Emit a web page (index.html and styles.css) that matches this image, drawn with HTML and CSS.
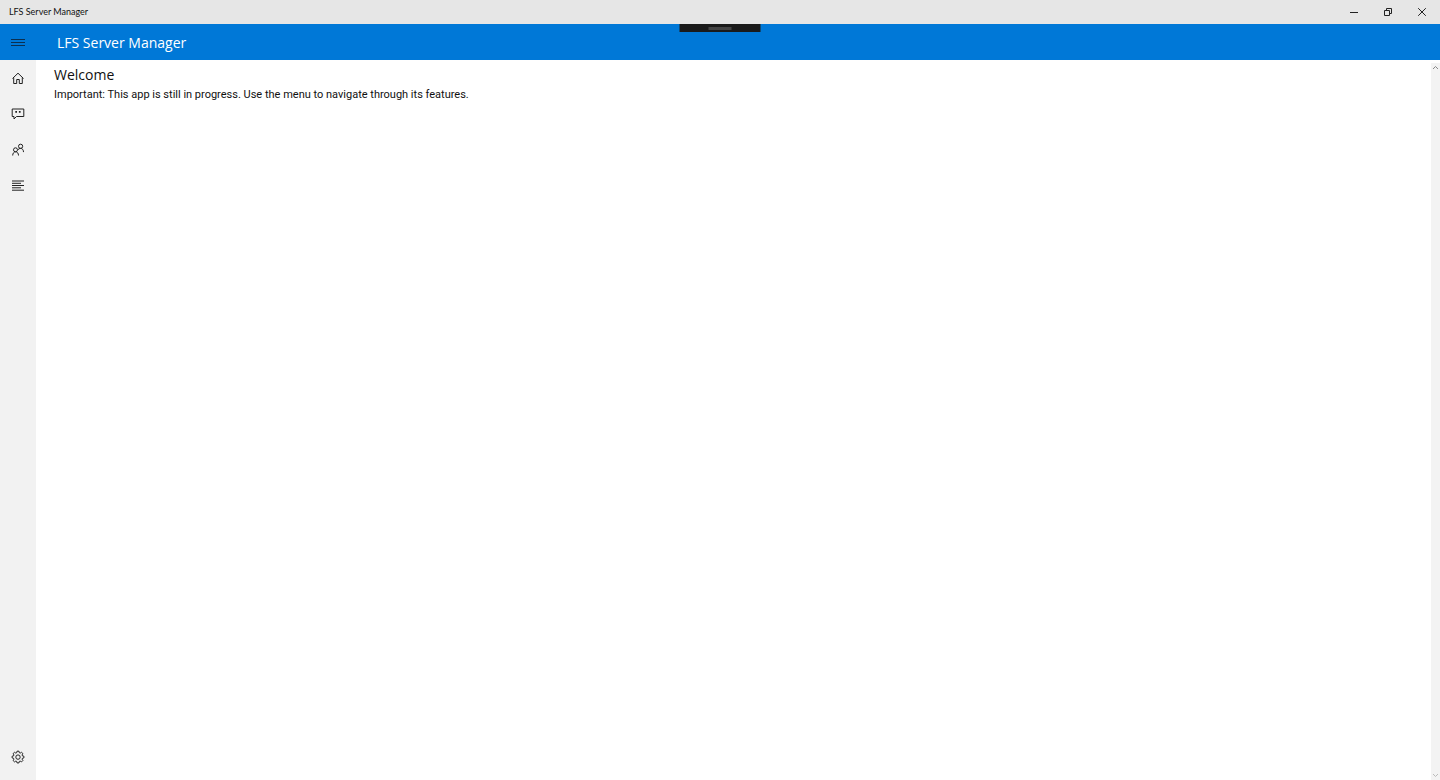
FILE: index.html
```html
<!DOCTYPE html>
<html lang="en">
<head>
    <meta charset="UTF-8">
    <meta name="viewport" content="width=device-width, initial-scale=1.0">
    <title>LFS Server Manager</title>
    <link rel="stylesheet" href="styles.css">
</head>
<body>
    <div class="titlebar">
        <span class="titlebar-text">LFS Server Manager</span>
        <div class="window-buttons">
            <button type="button" aria-label="Minimize">
                <svg width="8" height="8" viewBox="0 0 8 8"><path d="M0 4.500h8"/></svg>
            </button>
            <button type="button" aria-label="Restore">
                <svg width="8" height="8" viewBox="0 0 8 8"><path d="M0.5 2.5h5v5h-5zM2.5 2.5v-2h5v5h-2"/></svg>
            </button>
            <button type="button" aria-label="Close">
                <svg width="8" height="8" viewBox="0 0 8 8"><path d="M0.200 0.200l7.600 7.600M7.800 0.200l-7.600 7.600"/></svg>
            </button>
        </div>
    </div>

    <header class="header">
        <button type="button" class="menu-button" aria-label="Menu">
            <svg width="14" height="9" viewBox="0 0 14 9"><path d="M0 1.5h14M0 4.5h14M0 7.5h14"/></svg>
        </button>
        <h1>LFS Server Manager</h1>
        <!-- Debug toolbar handle -->
        <div class="debug-bar"><span></span></div>
    </header>

    <div class="main">
        <nav class="sidebar">
            <a href="#home" aria-label="Home">
                <svg width="14" height="14" viewBox="0 0 14 14"><path d="M1.500 7.500L7 2.200L12.500 7.500M2.700 6.500v6h3v-4h2.600v4h3v-6"/></svg>
            </a>
            <a href="#chat" aria-label="Chat">
                <svg width="14" height="14" viewBox="0 0 14 14"><path d="M1.200 2h11.600v7.500h-7.300l-2.500 2.500v-2.500h-1.800z"/><path class="dots" d="M4.300 4h1.700v1.700h-1.700zM7.900 4h1.700v1.700h-1.700z"/></svg>
            </a>
            <a href="#players" aria-label="Players">
                <svg width="14" height="14" viewBox="0 0 14 14"><circle cx="4.500" cy="6.800" r="2"/><circle cx="9.600" cy="3.300" r="2.100"/><path d="M1.700 12.500c0-2.200 1.200-3.700 2.900-3.700s2.900 1.500 2.900 3.700M7 6.700c.6-.9 1.500-1.300 2.600-1.300c1.800 0 2.900 1.500 2.900 3.700"/></svg>
            </a>
            <a href="#log" aria-label="Log">
                <svg width="14" height="14" viewBox="0 0 14 14"><path d="M1 2h12M1 4.300h9M1 6.500h12M1 8.800h9M1 11.200h12"/></svg>
            </a>
            <a href="#settings" class="settings" aria-label="Settings">
                <svg width="14" height="14" viewBox="0 0 14 14"><path d="M5.700 2.700L6 1.200h2l.3 1.500l.9.400l1.300-.8l1.400 1.300l-.8 1.300l.3 1l1.500.3v1.700l-1.500.4l-.3.900l.8 1.300l-1.400 1.400l-1.300-.8l-.9.300l-.3 1.500H6l-.3-1.500l-.9-.3l-1.300.8l-1.400-1.400l.8-1.300l-.3-.9l-1.500-.4V6.200l1.500-.3l.3-1l-.8-1.300l1.400-1.300l1.300.8z"/><circle cx="7" cy="7.100" r="2.200"/></svg>
            </a>
        </nav>

        <main class="content">
            <h2>Welcome</h2>
            <p>Important: This app is still in progress. Use the menu to navigate through its features.</p>
        </main>

        <div class="scrollbar">
            <button type="button" aria-label="Scroll up">
                <svg width="7" height="5" viewBox="0 0 7 5"><path d="M1 4l2.500-2.500L6 4"/></svg>
            </button>
            <button type="button" class="scroll-down" aria-label="Scroll down">
                <svg width="7" height="5" viewBox="0 0 7 5"><path d="M1 1l2.500 2.500L6 1"/></svg>
            </button>
        </div>
    </div>
</body>
</html>
```
FILE: styles.css
```css
* {
    box-sizing: border-box;
}
body {
    display: flex;
    flex-direction: column;
    height: 100vh;
    margin: 0;
    background-color: #fff;
    color: #111;
    font-family: "Open Sans", "Segoe UI", sans-serif;
}
h1, h2, p {
    margin: 0;
    font-weight: normal;
}
button {
    display: flex;
    align-items: center;
    justify-content: center;
    padding: 0;
    border: none;
    background: none;
}
svg {
    fill: none;
    stroke: #222;
    stroke-width: 1;
}

/* Window title bar */
.titlebar {
    display: flex;
    flex: none;
    justify-content: space-between;
    height: 24px;
    padding-left: 9px;
    background-color: #e6e6e6;
}
.titlebar-text {
    font-family: Lato, "Segoe UI", sans-serif;
    font-size: 9px;
    line-height: 24px;
}
.window-buttons {
    display: flex;
    padding-right: 1px;
}
.window-buttons button {
    width: 34px;
}

/* App header */
.header {
    position: relative;
    display: flex;
    flex: none;
    height: 36px;
    background-color: #0078d7;
    color: #fff;
}
.menu-button {
    width: 36px;
}
.menu-button svg {
    stroke: #0b2f50;
}
.header h1 {
    margin-left: 21px;
    font-size: 14px;
    line-height: 38px;
}
.debug-bar {
    position: absolute;
    top: 0;
    left: 50%;
    display: flex;
    align-items: center;
    justify-content: center;
    width: 81px;
    height: 8px;
    background-color: #1a1a1a;
    transform: translateX(-50%);
}
.debug-bar span {
    width: 23px;
    height: 3px;
    background-color: #444;
}

/* Page body */
.main {
    display: flex;
    flex: 1;
    min-height: 0;
}
.sidebar {
    display: flex;
    flex: none;
    flex-direction: column;
    width: 36px;
    background-color: #f2f2f2;
}
.sidebar a {
    display: flex;
    align-items: center;
    justify-content: center;
    height: 36px;
}
.sidebar .settings {
    margin-top: auto;
    margin-bottom: 5px;
}
.dots {
    fill: #222;
    stroke: none;
}
.content {
    flex: 1;
    padding: 5px 18px;
}
.content h2 {
    font-size: 14px;
    line-height: 20px;
}
.content p {
    font-family: Roboto, "Segoe UI", sans-serif;
    font-size: 11px;
    line-height: 20px;
}
.scrollbar {
    display: flex;
    flex: none;
    flex-direction: column;
    justify-content: space-between;
    width: 9px;
    margin-top: 3px;
    background-color: #f3f3f3;
}
.scrollbar button {
    height: 9px;
}
.scrollbar svg {
    stroke: #888;
}
.scrollbar .scroll-down svg {
    stroke: #bbb;
}
```
